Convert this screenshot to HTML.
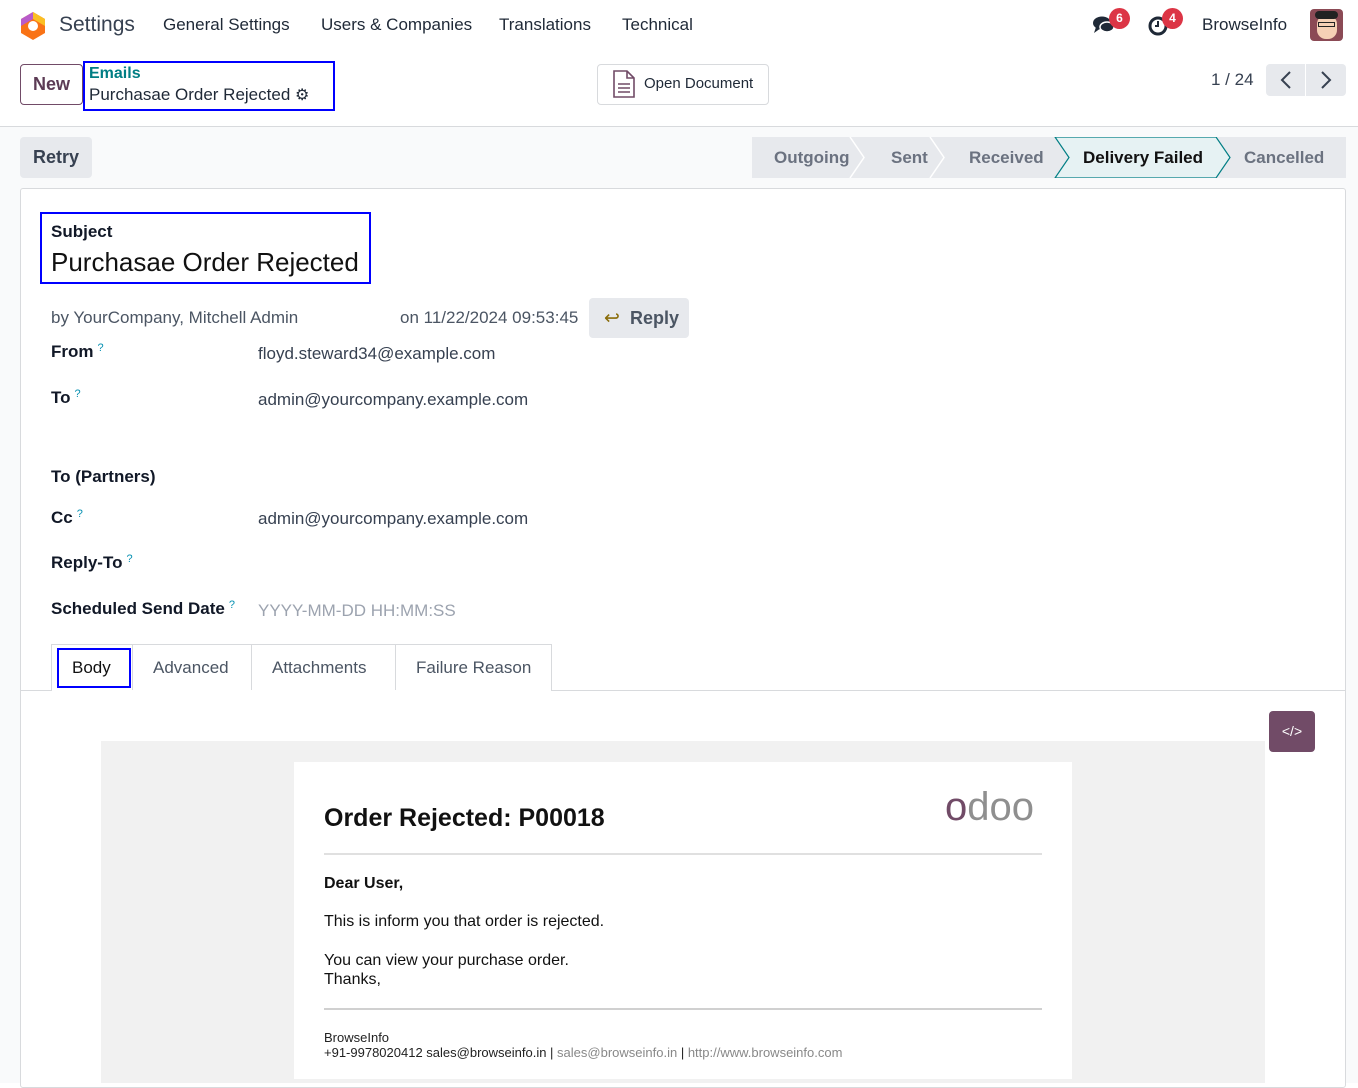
<!DOCTYPE html>
<html><head><meta charset="utf-8"><style>
*{box-sizing:border-box;margin:0;padding:0}
body{width:1358px;height:1083px;overflow:hidden;background:#fff;font-family:"Liberation Sans",sans-serif;color:#374151;position:relative}
.a{position:absolute;white-space:nowrap}
.top{font-size:17px;color:#1f2937}
.lbl{font-size:17px;font-weight:bold;color:#111827}
.q{color:#0891b2;font-size:11px;vertical-align:top;margin-left:4px;font-weight:normal}
.val{font-size:17px;color:#374151}
</style></head><body>
<!-- navbar -->
<svg class="a" style="left:19px;top:11px" width="28" height="30" viewBox="0 0 28 30"><path d="M14 1 L26 8 L26 22 L14 29 L2 22 L2 8Z" fill="#f97316"/><path d="M14 1 L26 8 L26 15 L14 8Z" fill="#fbbf24"/><path d="M2 8 L14 1 L14 8 L2 15Z" fill="#a855f7" opacity=".8"/><circle cx="14" cy="15" r="5" fill="#fff"/></svg>
<div class="a" style="left:59px;top:13px;font-size:21px;color:#374151">Settings</div>
<div class="a top" style="left:163px;top:15px">General Settings</div>
<div class="a top" style="left:321px;top:15px">Users &amp; Companies</div>
<div class="a top" style="left:499px;top:15px">Translations</div>
<div class="a top" style="left:622px;top:15px">Technical</div>
<svg class="a" style="left:1092px;top:14px" width="26" height="22" viewBox="0 0 26 22"><ellipse cx="10" cy="9" rx="9" ry="6.5" fill="#1f2937"/><path d="M4 13 L2 19 L9 14Z" fill="#1f2937"/><ellipse cx="15" cy="13" rx="7" ry="5" fill="#1f2937" stroke="#fff" stroke-width="1.5"/></svg>
<div class="a" style="left:1109px;top:8px;width:21px;height:21px;border-radius:50%;background:#dc3545;color:#fff;font-size:12px;font-weight:bold;text-align:center;line-height:21px">6</div>
<svg class="a" style="left:1147px;top:14px" width="24" height="24" viewBox="0 0 24 24"><circle cx="11" cy="12" r="8" fill="none" stroke="#1f2937" stroke-width="3"/><path d="M11 7 V12 H8" stroke="#1f2937" stroke-width="2" fill="none"/></svg>
<div class="a" style="left:1162px;top:8px;width:21px;height:21px;border-radius:50%;background:#dc3545;color:#fff;font-size:12px;font-weight:bold;text-align:center;line-height:21px">4</div>
<div class="a top" style="left:1202px;top:15px">BrowseInfo</div>
<div class="a" style="left:1310px;top:9px;width:33px;height:32px;border-radius:4px;background:#8b4a55;overflow:hidden"><div style="position:absolute;left:7px;top:6px;width:20px;height:24px;border-radius:9px;background:#f5d0b5"></div><div style="position:absolute;left:5px;top:2px;width:23px;height:8px;border-radius:4px;background:#222"></div><div style="position:absolute;left:8px;top:13px;width:17px;height:5px;border:1.5px solid #222"></div></div>
<!-- control panel -->
<div class="a" style="left:20px;top:64px;width:63px;height:41px;border:1px solid #714b67;border-radius:4px;font-size:18px;text-align:center;line-height:39px;font-weight:bold;color:#5c3b55">New</div>
<div class="a" style="left:83px;top:61px;width:252px;height:50px;border:2px solid #0000ff"></div>
<div class="a" style="left:89px;top:65px;font-size:16px;font-weight:bold;color:#017e84">Emails</div>
<div class="a" style="left:89px;top:85px;font-size:17px;color:#1f2937">Purchasae Order Rejected <span style="font-size:16px">⚙</span></div>
<div class="a" style="left:597px;top:64px;width:172px;height:41px;border:1px solid #d8dadd;border-radius:4px"></div>
<svg class="a" style="left:612px;top:70px" width="24" height="28" viewBox="0 0 24 28"><path d="M2 1 H15 L22 8 V27 H2Z M15 1 V8 H22" fill="none" stroke="#714b67" stroke-width="1.6"/><path d="M6 14 H18 M6 18 H18 M6 22 H18" stroke="#714b67" stroke-width="1.5"/></svg>
<div class="a" style="left:644px;top:75px;font-size:15px;color:#1f2937">Open Document</div>
<div class="a" style="left:1211px;top:70px;font-size:17px;color:#374151">1 / 24</div>
<div class="a" style="left:1266px;top:64px;width:39px;height:32px;background:#e7e9ed;border-radius:4px 0 0 4px"></div>
<div class="a" style="left:1306px;top:64px;width:40px;height:32px;background:#e7e9ed;border-radius:0 4px 4px 0"></div>
<svg class="a" style="left:1266px;top:64px" width="80" height="32"><path d="M24 8 L16 16 L24 24 M56 8 L64 16 L56 24" fill="none" stroke="#374151" stroke-width="2"/></svg>
<!-- gray area -->
<div class="a" style="left:0;top:126px;width:1358px;height:957px;background:#f9fafb;border-top:1px solid #d8dadd"></div>
<div class="a" style="left:20px;top:137px;width:72px;height:41px;background:#e7e9ed;border-radius:4px;font-size:18px;font-weight:bold;color:#374151;text-align:center;line-height:41px">Retry</div>
<svg class="a" style="left:752px;top:137px" width="594" height="41">
<rect x="0" y="0" width="594" height="41" fill="#e7e9ed"/>
<path d="M303 0 H464 L478 20.5 L464 41 H303 L317 20.5Z" fill="#e6f2f3" stroke="#017e84" stroke-width="1.2"/>
<path d="M98 0 L112 20.5 L98 41 M178 0 L192 20.5 L178 41" fill="none" stroke="#fff" stroke-width="1.5"/>
<text x="22" y="26" font-family="Liberation Sans" font-size="17" font-weight="bold" fill="#6b7280">Outgoing</text>
<text x="139" y="26" font-family="Liberation Sans" font-size="17" font-weight="bold" fill="#6b7280">Sent</text>
<text x="217" y="26" font-family="Liberation Sans" font-size="17" font-weight="bold" fill="#6b7280">Received</text>
<text x="331" y="26" font-family="Liberation Sans" font-size="17" font-weight="bold" fill="#111">Delivery Failed</text>
<text x="492" y="26" font-family="Liberation Sans" font-size="17" font-weight="bold" fill="#6b7280">Cancelled</text>
</svg>
<!-- sheet -->
<div class="a" style="left:20px;top:188px;width:1326px;height:900px;background:#fff;border:1px solid #d8dadd;border-radius:3px"></div>
<div class="a" style="left:40px;top:212px;width:331px;height:72px;border:2px solid #0000ff"></div>
<div class="a lbl" style="left:51px;top:222px">Subject</div>
<div class="a" style="left:51px;top:247px;font-size:26px;color:#111">Purchasae Order Rejected</div>
<div class="a val" style="left:51px;top:308px;color:#4b5563">by YourCompany, Mitchell Admin</div>
<div class="a val" style="left:400px;top:308px;color:#4b5563">on 11/22/2024 09:53:45</div>
<div class="a" style="left:589px;top:298px;width:100px;height:40px;background:#e7e9ed;border-radius:4px"></div>
<div class="a" style="left:604px;top:307px;font-size:19px;color:#8a6d0b">↩</div>
<div class="a" style="left:630px;top:308px;font-size:18px;font-weight:bold;color:#4b5563">Reply</div>
<div class="a lbl" style="left:51px;top:342px">From<span class="q">?</span></div>
<div class="a val" style="left:258px;top:344px">floyd.steward34@example.com</div>
<div class="a lbl" style="left:51px;top:388px">To<span class="q">?</span></div>
<div class="a val" style="left:258px;top:390px">admin@yourcompany.example.com</div>
<div class="a lbl" style="left:51px;top:467px">To (Partners)</div>
<div class="a lbl" style="left:51px;top:508px">Cc<span class="q">?</span></div>
<div class="a val" style="left:258px;top:509px">admin@yourcompany.example.com</div>
<div class="a lbl" style="left:51px;top:553px">Reply-To<span class="q">?</span></div>
<div class="a lbl" style="left:51px;top:599px">Scheduled Send Date<span class="q">?</span></div>
<div class="a val" style="left:258px;top:601px;color:#9ca3af">YYYY-MM-DD HH:MM:SS</div>
<!-- tabs -->
<div class="a" style="left:20px;top:690px;width:1326px;height:1px;background:#d8dadd"></div>
<div class="a" style="left:51px;top:644px;width:501px;height:47px;border:1px solid #d8dadd;border-bottom:none;background:#fff"></div>
<div class="a" style="left:132px;top:644px;width:1px;height:46px;background:#d8dadd"></div>
<div class="a" style="left:251px;top:644px;width:1px;height:46px;background:#d8dadd"></div>
<div class="a" style="left:395px;top:644px;width:1px;height:46px;background:#d8dadd"></div>
<div class="a" style="left:57px;top:648px;width:74px;height:40px;border:2px solid #0000ff"></div>
<div class="a val" style="left:72px;top:658px;color:#111">Body</div>
<div class="a val" style="left:153px;top:658px;color:#4b5563">Advanced</div>
<div class="a val" style="left:272px;top:658px;color:#4b5563">Attachments</div>
<div class="a val" style="left:416px;top:658px;color:#4b5563">Failure Reason</div>
<!-- body -->
<div class="a" style="left:1269px;top:711px;width:46px;height:41px;background:#714b67;border-radius:4px;color:#fff;font-size:14px;text-align:center;line-height:41px">&lt;/&gt;</div>
<div class="a" style="left:101px;top:741px;width:1164px;height:342px;background:#f1f1f1"></div>
<div class="a" style="left:294px;top:762px;width:778px;height:317px;background:#fff"></div>
<div class="a" style="left:324px;top:804px;font-size:25px;font-weight:bold;color:#111">Order Rejected: P00018</div>
<div class="a" style="left:945px;top:785px;font-size:40px;letter-spacing:0"><span style="color:#714b67">o</span><span style="color:#8f8f8f">doo</span></div>
<div class="a" style="left:324px;top:853px;width:718px;height:2px;background:#e0e0e0"></div>
<div class="a" style="left:324px;top:875px;font-size:16px;font-weight:bold;color:#111">Dear User,</div>
<div class="a" style="left:324px;top:913px;font-size:16px;color:#111">This is inform you that order is rejected.</div>
<div class="a" style="left:324px;top:951px;font-size:16px;color:#111;line-height:19px">You can view your purchase order.<br>Thanks,</div>
<div class="a" style="left:324px;top:1008px;width:718px;height:2px;background:#d0d0d0"></div>
<div class="a" style="left:324px;top:1030px;font-size:13px;color:#222;line-height:15px">BrowseInfo<br>+91-9978020412 sales@browseinfo.in | <span style="color:#888">sales@browseinfo.in</span> | <span style="color:#888">http://www.browseinfo.com</span></div>
</body></html>
